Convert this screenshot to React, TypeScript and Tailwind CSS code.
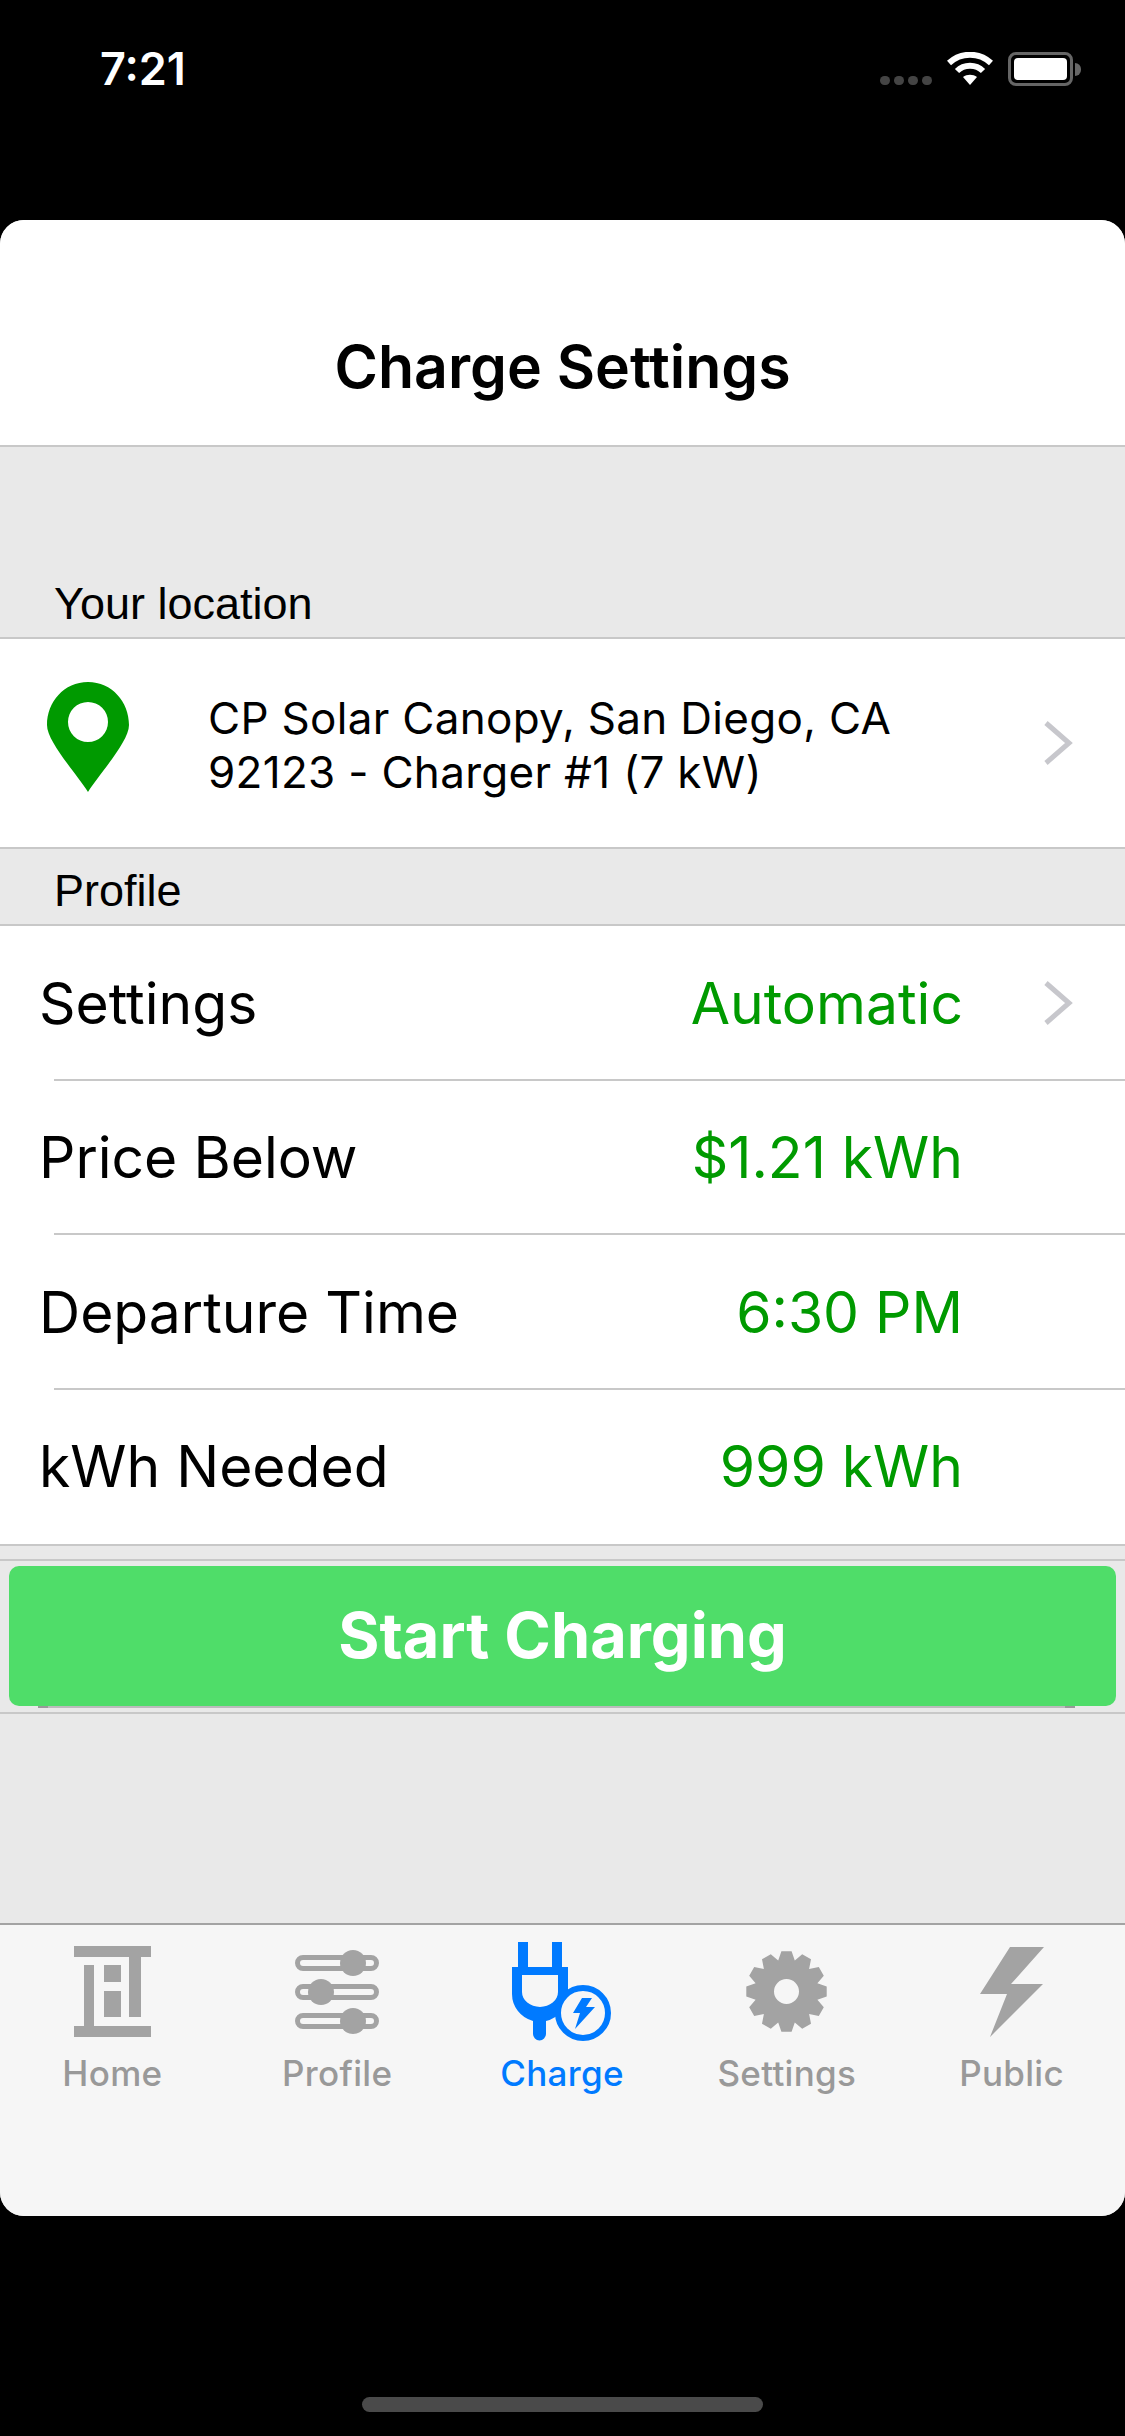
const SF = "font-['Inter',sans-serif]";
const ARIAL = "font-['Liberation_Sans',sans-serif]";

function Chevron() {
  return (
    <svg width="30" height="46" viewBox="0 0 30 46" className="shrink-0">
      <path d="M3 3 L26 23 L3 43" fill="none" stroke="#c7c7cc" strokeWidth="5" />
    </svg>
  );
}

function Pin() {
  return (
    <svg width="82" height="110" viewBox="0 0 82 110" className="shrink-0 -mt-[13px]">
      <path
        fillRule="evenodd"
        fill="#009a00"
        d="M41 0C65 0 82 20 82 43C82 60 52 92 41 110C30 92 0 60 0 43C0 20 17 0 41 0ZM41 20A20 20 0 1 0 41 60A20 20 0 1 0 41 20Z"
      />
    </svg>
  );
}

function HomeIcon() {
  return (
    <svg width="77" height="91" viewBox="0 0 77 91" fill="#a3a3a3">
      <rect x="0" y="0" width="77" height="11" />
      <rect x="55" y="11" width="12" height="60" />
      <rect x="10" y="19" width="10" height="61" />
      <rect x="0" y="80" width="77" height="11" />
      <rect x="30" y="19" width="17" height="17" />
      <rect x="30" y="45" width="17" height="26" />
    </svg>
  );
}

function ProfileIcon() {
  const rows = [
    { y: 13, knob: 58 },
    { y: 42, knob: 26 },
    { y: 71, knob: 58 },
  ];
  return (
    <svg width="84" height="84" viewBox="0 0 84 84" fill="#a3a3a3">
      {rows.map((r) => (
        <g key={r.y}>
          <rect x="2.5" y={r.y - 5.5} width="79" height="11" rx="5.5" fill="none" stroke="#a3a3a3" strokeWidth="5" />
          <circle cx={r.knob} cy={r.y} r="13" />
        </g>
      ))}
    </svg>
  );
}

function ChargeIcon() {
  return (
    <svg width="99" height="99" viewBox="0 0 99 99" fill="#007aff">
      <rect x="6" y="0" width="10" height="26" />
      <rect x="40" y="0" width="10" height="26" />
      <path
        fillRule="evenodd"
        d="M0 25H56V52A28 28 0 0 1 34 79V92A6.500 6.500 0 0 1 21 92V79A28 28 0 0 1 0 52ZM10 33V50A18 15 0 0 0 46 50V33Z"
      />
      <circle cx="71" cy="71" r="25" fill="#f6f6f6" stroke="#007aff" strokeWidth="6" />
      <polygon points="70,56 80,56 74,65 83,65 63,87 68,71 61,71" />
    </svg>
  );
}

function GearIcon() {
  const teeth = 12;
  const pts: string[] = [];
  for (let i = 0; i < teeth; i++) {
    const a = (i * 2 * Math.PI) / teeth;
    const step = (2 * Math.PI) / teeth;
    [
      [-0.5, 32],
      [-0.24, 40.5],
      [0.24, 40.5],
      [0.5, 32],
    ].forEach(([o, r]) => {
      const t = a + o * step;
      pts.push(`${(40.5 + r * Math.cos(t)).toFixed(1)} ${(40.5 + r * Math.sin(t)).toFixed(1)}`);
    });
  }
  return (
    <svg width="81" height="81" viewBox="0 0 81 81" fill="#a3a3a3">
      <path fillRule="evenodd" d={`M${pts.join("L")}Z M40.500 28A12.500 12.500 0 1 0 40.500 53A12.500 12.500 0 1 0 40.500 28Z`} />
    </svg>
  );
}

function BoltIcon() {
  return (
    <svg width="64" height="90" viewBox="0 0 64 90" fill="#a3a3a3">
      <polygon points="30,0 64,0 31,37 63,37 10,90 27,47 0,47" />
    </svg>
  );
}

function Wifi() {
  return (
    <svg width="46" height="34" viewBox="0 0 46 34" fill="none" stroke="#fff" strokeWidth="6">
      <path d="M2 11C14 0 32 0 44 11" />
      <path d="M10 19C17 12 29 12 36 19" />
      <path d="M23 33L16 25C20 22 26 22 30 25Z" fill="#fff" stroke="none" />
    </svg>
  );
}

function StatusBar() {
  return (
    <div className="h-[220px] flex items-start justify-between pl-[100px] pr-[44px] pt-[52px]">
      <span className={`${SF} text-[45px] leading-[34px] font-semibold text-white`}>7:21</span>
      <div className="flex items-end">
        <div className="flex gap-[4px] mb-[1px]">
          <div className="w-[10px] h-[9px] rounded-full bg-[#444]" />
          <div className="w-[10px] h-[9px] rounded-full bg-[#444]" />
          <div className="w-[10px] h-[9px] rounded-full bg-[#444]" />
          <div className="w-[10px] h-[9px] rounded-full bg-[#444]" />
        </div>
        <div className="ml-[15px]">
          <Wifi />
        </div>
        <div className="ml-[15px] w-[65px] h-[34px] rounded-[8px] border-[3px] border-[#666] p-[3px]">
          <div className="w-full h-full rounded-[4px] bg-white" />
        </div>
        <div className="ml-[2px] mb-[10px] w-[6px] h-[13px] rounded-r-full bg-[#666]" />
      </div>
    </div>
  );
}

function SectionLabel({ text, className }: { text: string; className: string }) {
  return (
    <div className={`${ARIAL} ${className} flex items-end pl-[54px] text-[45px] leading-[52px] text-black border-b-[2px] border-[#c8c8c8]`}>
      {text}
    </div>
  );
}

function ProfileRow({
  label,
  value,
  arrow,
  last,
}: {
  label: string;
  value: string;
  arrow?: boolean;
  last?: boolean;
}) {
  return (
    <div className="relative h-[154.5px] flex items-center pl-[39px] bg-white">
      <span className={`${SF} text-[57px] text-black`}>{label}</span>
      <span className={`${SF} ml-auto text-[57px] text-[#009a00]`}>{value}</span>
      <div className="w-[162px] shrink-0 flex justify-end pr-[52px]">{arrow && <Chevron />}</div>
      {!last && <div className="absolute left-[54px] right-0 bottom-0 h-[2px] bg-[#c8c8c8]" />}
    </div>
  );
}

function Tab({ label, icon, active }: { label: string; icon: React.ReactNode; active?: boolean }) {
  return (
    <div className="flex-1 flex flex-col items-center">
      <div className="h-[117px] flex items-center justify-center pt-[16px]">{icon}</div>
      <span className={`${SF} mt-[11px] text-[35px] leading-[40px] font-medium tracking-[0.3px] ${active ? "text-[#007aff]" : "text-[#999]"}`}>
        {label}
      </span>
    </div>
  );
}

export default function App() {
  return (
    <div className="w-[1125px] h-[2436px] bg-black flex flex-col">
      <StatusBar />
      <div className="h-[1996px] rounded-[24px] overflow-hidden bg-[#e9e9e9] flex flex-col">
        <div className="h-[227px] bg-white border-b-[2px] border-[#c8c8c8] flex items-center justify-center pt-[70px]">
          <span className={`${SF} text-[59px] font-semibold text-black`}>Charge Settings</span>
        </div>
        <SectionLabel text="Your location" className="h-[192px] pb-[7px]" />
        <div className="h-[208px] bg-white flex items-center pl-[47px] pr-[52px]">
          <Pin />
          <div className={`${SF} ml-[79px] mt-[3px] text-[44px] leading-[54px] tracking-[0.3px] text-black`}>
            CP Solar Canopy, San Diego, CA
            <br />
            92123 - Charger #1 (7 kW)
          </div>
          <div className="ml-auto">
            <Chevron />
          </div>
        </div>
        <SectionLabel text="Profile" className="h-[79px] pb-[7px] border-t-[2px]" />
        <ProfileRow label="Settings" value="Automatic" arrow />
        <ProfileRow label="Price Below" value="$1.21 kWh" />
        <ProfileRow label="Departure Time" value="6:30 PM" />
        <ProfileRow label="kWh Needed" value="999 kWh" last />
        <div className="h-[15px] border-t-[2px] border-[#c8c8c8]" />
        <div className="relative h-[155px] border-y-[2px] border-[#c8c8c8] px-[9px] pt-[5px]">
          <div className="absolute left-[38px] right-[50px] top-[145px] h-[2px] bg-[#bbb] flex justify-between">
            <div className="w-[10px] h-[2px] bg-[#999]" />
            <div className="w-[10px] h-[2px] bg-[#999]" />
          </div>
          <div className="relative h-[140px] rounded-[10px] bg-[#4fdd69] flex items-center justify-center pb-[2px]">
            <span className={`${SF} text-[63px] font-bold text-white`}>Start Charging</span>
          </div>
        </div>
        <div className="flex-1" />
        <div className="h-[293px] bg-[#f6f6f6] border-t-[2px] border-[#a3a3a3] flex pr-[1px]">
          <Tab label="Home" icon={<HomeIcon />} />
          <Tab label="Profile" icon={<ProfileIcon />} />
          <Tab label="Charge" icon={<ChargeIcon />} active />
          <Tab label="Settings" icon={<GearIcon />} />
          <Tab label="Public" icon={<BoltIcon />} />
        </div>
      </div>
      <div className="flex-1 flex justify-center pt-[181px]">
        <div className="w-[401px] h-[15px] rounded-full bg-[#4a4a4a]" />
      </div>
    </div>
  );
}
